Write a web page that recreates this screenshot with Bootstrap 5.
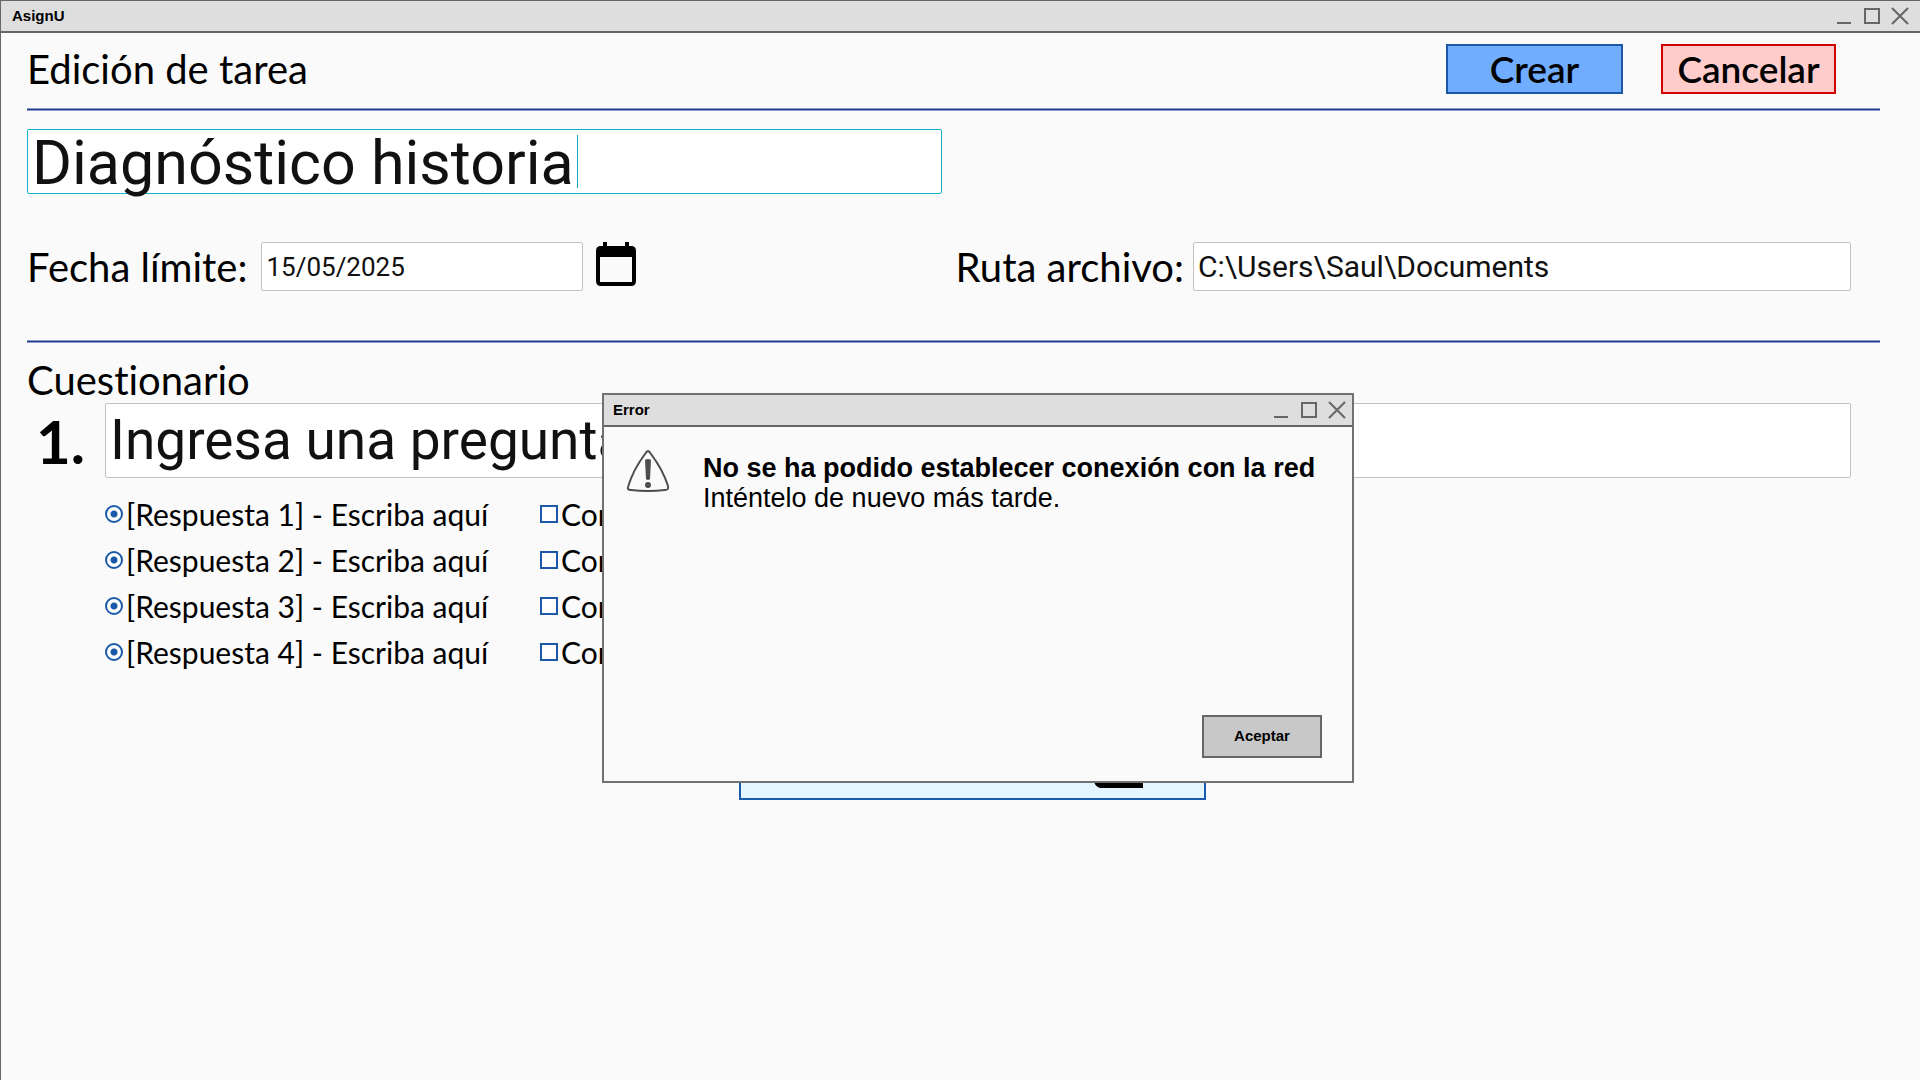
<!DOCTYPE html>
<html lang="es">
<head>
<meta charset="utf-8">
<meta name="viewport" content="width=device-width, initial-scale=1">
<title>AsignU</title>
<link href="https://cdn.jsdelivr.net/npm/bootstrap@5.3.0/dist/css/bootstrap.min.css" rel="stylesheet">
<style>
  body { background: #fafafa; color: #000; font-family: Lato, sans-serif; font-variant-ligatures: none; }
  .app-window { border-left: 1px solid #666; border-top: 1px solid #666; }
  .title-bar { height: 32px; background: #dedede; border-bottom: 2px solid #666; font: bold 15px/20px "Liberation Sans", sans-serif; }
  .win-btn { width: 28px; height: 28px; padding: 0; border: 0; background: none; display: flex; align-items: center; justify-content: center; }
  .win-btn svg { width: 18px; height: 18px; fill: none; stroke: #666; stroke-width: 2; }
  .app-title { padding-left: 11px; padding-right: 6px; }
  .dialog-title { padding-left: 9px; padding-right: 1px; }
  .page-body { padding: 0 40px 0 26px; }
  .rule { height: 3px; margin: 0; opacity: 1; background: #1f3a87; border: solid #8b9cca; border-width: 1px 0; }
  .head-row { height: 75px; padding: 0 44px 3px 0; gap: 38px; }
  .big-label { font-size: 40px; line-height: 48px; font-weight: 400; margin: 0; white-space: nowrap; }
  .action { height: 50px; border: 2px solid; border-radius: 0; padding: 0; font-size: 37px; line-height: 44px; font-weight: 600; color: #000; }
  .action-create { width: 177px; background: #70adff; border-color: #1d58a8; }
  .action-cancel { width: 175px; background: #ffcccc; border-color: #d00000; }
  .field { border: 1px solid #c2c2c2; border-radius: 2px; background: #fff; color: #111; font-family: Roboto, sans-serif; padding: 0 4px; }
  .field:focus { box-shadow: none; border-color: #00b8cc; background: #fff; color: #111; }
  .task-title { position: relative; width: 915px; max-width: 100%; height: 65px; margin-top: 18px; background: #fff; border: 1px solid #12b4cd; border-radius: 2px; }
  .title-input, .title-input:focus { flex: 1; height: 76px; border: 0; outline: 0; padding: 2px 4px 0; background: none; color: #111; font: 61px/74px Roboto, sans-serif; }
  .caret { position: absolute; left: 549px; top: 5px; width: 1px; height: 53px; background: #12a9c4; }
  .meta-row { margin-top: 48px; padding-right: 29px; }
  .meta-row .field { height: 49px; flex: none; }
  .date-field { width: 322px; margin-left: 14px; font-size: 26px; }
  .path-field { width: 658px; margin-left: 9px; font-size: 30px; }
  .cal-btn { flex: none; align-self: flex-start; border: 0; background: none; padding: 0; width: 40px; height: 44px; margin-left: 13px; }
  .second-rule { margin-top: 49px; }
  .section-title { padding-top: 13px; height: 60px; }
  .question { padding-right: 29px; }
  .q-num { width: 78px; padding-left: 9px; font-size: 60px; line-height: 72px; font-weight: 700; }
  .q-field { height: 75px; font-size: 55px; }
  .answers { padding: 13px 0 0 78px; }
  .answer { height: 46px; font-size: 30px; line-height: 36px; }
  .answer label { padding-left: 3px; }
  .answer-main { width: 435px; }
  .tick { appearance: none; width: 18px; height: 18px; margin: 0; border: 2px solid #1b59a8; background: #fff; flex: none; }
  .tick-radio { border-radius: 50%; background: radial-gradient(circle, #1b59a8 0 3px, #fff 4px); }
  .add-row { padding: 45px 0 0 38px; }
  .add-btn { width: 467px; height: 80px; border: 2px solid #1b59ab; border-radius: 0; background: #e3f5ff; font-size: 36px; line-height: 44px; color: #000; padding: 0 61px 0 22px; }
  .dialog-layer { position: absolute; left: 0; right: 0; top: 393px; padding-left: 36px; pointer-events: none; }
  .error-dialog { pointer-events: auto; width: 752px; min-height: 390px; background: #fafafa; border: 2px solid #717171; font-family: "Liberation Sans", sans-serif; }
  .dialog-content { padding: 23px 22px 0; gap: 33px; }
  .dialog-foot { padding: 0 30px 23px; }
  .message { font-size: 27px; line-height: 30px; margin: 3px 0 0; }
  .accept { width: 120px; height: 43px; border: 2px solid #666; border-radius: 0; background: #c8c8c8; font-size: 15px; font-weight: 700; padding: 0; color: #000; }
</style>
<script src="https://cdn.jsdelivr.net/npm/bootstrap@5.3.0/dist/js/bootstrap.bundle.min.js"></script>
</head>
<body>
<div class="app-window min-vh-100">
  <header class="title-bar app-title d-flex align-items-center">
    <span class="me-auto">AsignU</span>
    <button class="win-btn" type="button" aria-label="Minimizar"><svg viewBox="0 0 18 18"><path d="M2 16H16"/></svg></button>
    <button class="win-btn" type="button" aria-label="Maximizar"><svg viewBox="0 0 18 18"><path d="M2 2H16V16H2Z"/></svg></button>
    <button class="win-btn" type="button" aria-label="Cerrar"><svg viewBox="0 0 18 18"><path d="M1 1L17 17M17 1L1 17"/></svg></button>
  </header>
  <main class="page-body">
    <div class="head-row d-flex align-items-center">
      <h1 class="big-label me-auto">Edición de tarea</h1>
      <button class="btn action action-create" type="button">Crear</button>
      <button class="btn action action-cancel" type="button">Cancelar</button>
    </div>
    <hr class="rule">
    <div class="task-title d-flex align-items-center">
      <input class="title-input" type="text" value="Diagnóstico historia" aria-label="Título de la tarea">
      <span class="caret"></span>
    </div>
    <div class="meta-row d-flex align-items-center">
      <label class="big-label" for="due">Fecha límite:</label>
      <input class="form-control field date-field" id="due" type="text" value="15/05/2025">
      <button class="cal-btn" type="button" aria-label="Abrir calendario">
        <svg class="d-block" width="40" height="44" viewBox="0 0 40 44"><path fill-rule="evenodd" d="M7 0H11V4H29V0H33V4H35Q40 4 40 9V39Q40 44 35 44H5Q0 44 0 39V9Q0 4 5 4H7ZM4 15V40H36V15Z"/></svg>
      </button>
      <label class="big-label ms-auto" for="path">Ruta archivo:</label>
      <input class="form-control field path-field" id="path" type="text" value="C:\Users\Saul\Documents">
    </div>
    <hr class="rule second-rule">
    <h2 class="big-label section-title">Cuestionario</h2>
    <div class="question d-flex align-items-center">
      <label class="q-num flex-shrink-0" for="q1">1.</label>
      <input class="form-control field q-field" id="q1" type="text" value="Ingresa una pregunta">
    </div>
    <div class="answers">
      <div class="answer d-flex align-items-center">
        <div class="answer-main d-flex align-items-center"><input class="tick tick-radio" type="radio" id="r1" name="a1" checked><label for="r1">[Respuesta 1] - Escriba aquí</label></div>
        <input class="tick" type="checkbox" id="c1"><label for="c1">Correcta</label>
      </div>
      <div class="answer d-flex align-items-center">
        <div class="answer-main d-flex align-items-center"><input class="tick tick-radio" type="radio" id="r2" name="a2" checked><label for="r2">[Respuesta 2] - Escriba aquí</label></div>
        <input class="tick" type="checkbox" id="c2"><label for="c2">Correcta</label>
      </div>
      <div class="answer d-flex align-items-center">
        <div class="answer-main d-flex align-items-center"><input class="tick tick-radio" type="radio" id="r3" name="a3" checked><label for="r3">[Respuesta 3] - Escriba aquí</label></div>
        <input class="tick" type="checkbox" id="c3"><label for="c3">Correcta</label>
      </div>
      <div class="answer d-flex align-items-center">
        <div class="answer-main d-flex align-items-center"><input class="tick tick-radio" type="radio" id="r4" name="a4" checked><label for="r4">[Respuesta 4] - Escriba aquí</label></div>
        <input class="tick" type="checkbox" id="c4"><label for="c4">Correcta</label>
      </div>
    </div>
    <div class="add-row d-flex justify-content-center">
      <button class="btn add-btn d-flex align-items-center justify-content-between" type="button">Agregar pregunta
        <svg width="49" height="56" viewBox="0 0 49 56"><path d="M6 0H49V56H6Q0 54 0 48V6Q0 0 6 0Z"/><path d="M24 14V36M13 25H35" stroke="#e3f5ff" stroke-width="4"/></svg>
      </button>
    </div>
  </main>
  <div class="dialog-layer d-flex justify-content-center">
    <section class="error-dialog d-flex flex-column" role="dialog" aria-label="Error">
      <div class="title-bar dialog-title d-flex align-items-center">
        <span class="me-auto">Error</span>
        <button class="win-btn" type="button" aria-label="Minimizar"><svg viewBox="0 0 18 18"><path d="M2 16H16"/></svg></button>
        <button class="win-btn" type="button" aria-label="Maximizar"><svg viewBox="0 0 18 18"><path d="M2 2H16V16H2Z"/></svg></button>
        <button class="win-btn" type="button" aria-label="Cerrar"><svg viewBox="0 0 18 18"><path d="M1 1L17 17M17 1L1 17"/></svg></button>
      </div>
      <div class="dialog-content d-flex flex-grow-1">
        <svg class="flex-shrink-0" width="44" height="44" viewBox="0 0 44 44"><path d="M22 1Q23 1 25 4Q37 20 42 36Q43 40 39 40Q22 42 5 40Q1 40 2 37Q7 20 19 4Q21 1 22 1Z" fill="none" stroke="#4d4d4d" stroke-width="2"/><path d="M19 10Q22 8 25 10L24 29Q22 31 20 29Z" fill="#4d4d4d"/><circle cx="22" cy="35" r="3" fill="#4d4d4d"/></svg>
        <p class="message"><strong>No se ha podido establecer conexión con la red</strong><br>Inténtelo de nuevo más tarde.</p>
      </div>
      <div class="dialog-foot d-flex justify-content-end">
        <button class="btn accept" type="button">Aceptar</button>
      </div>
    </section>
  </div>
</div>
</body>
</html>
